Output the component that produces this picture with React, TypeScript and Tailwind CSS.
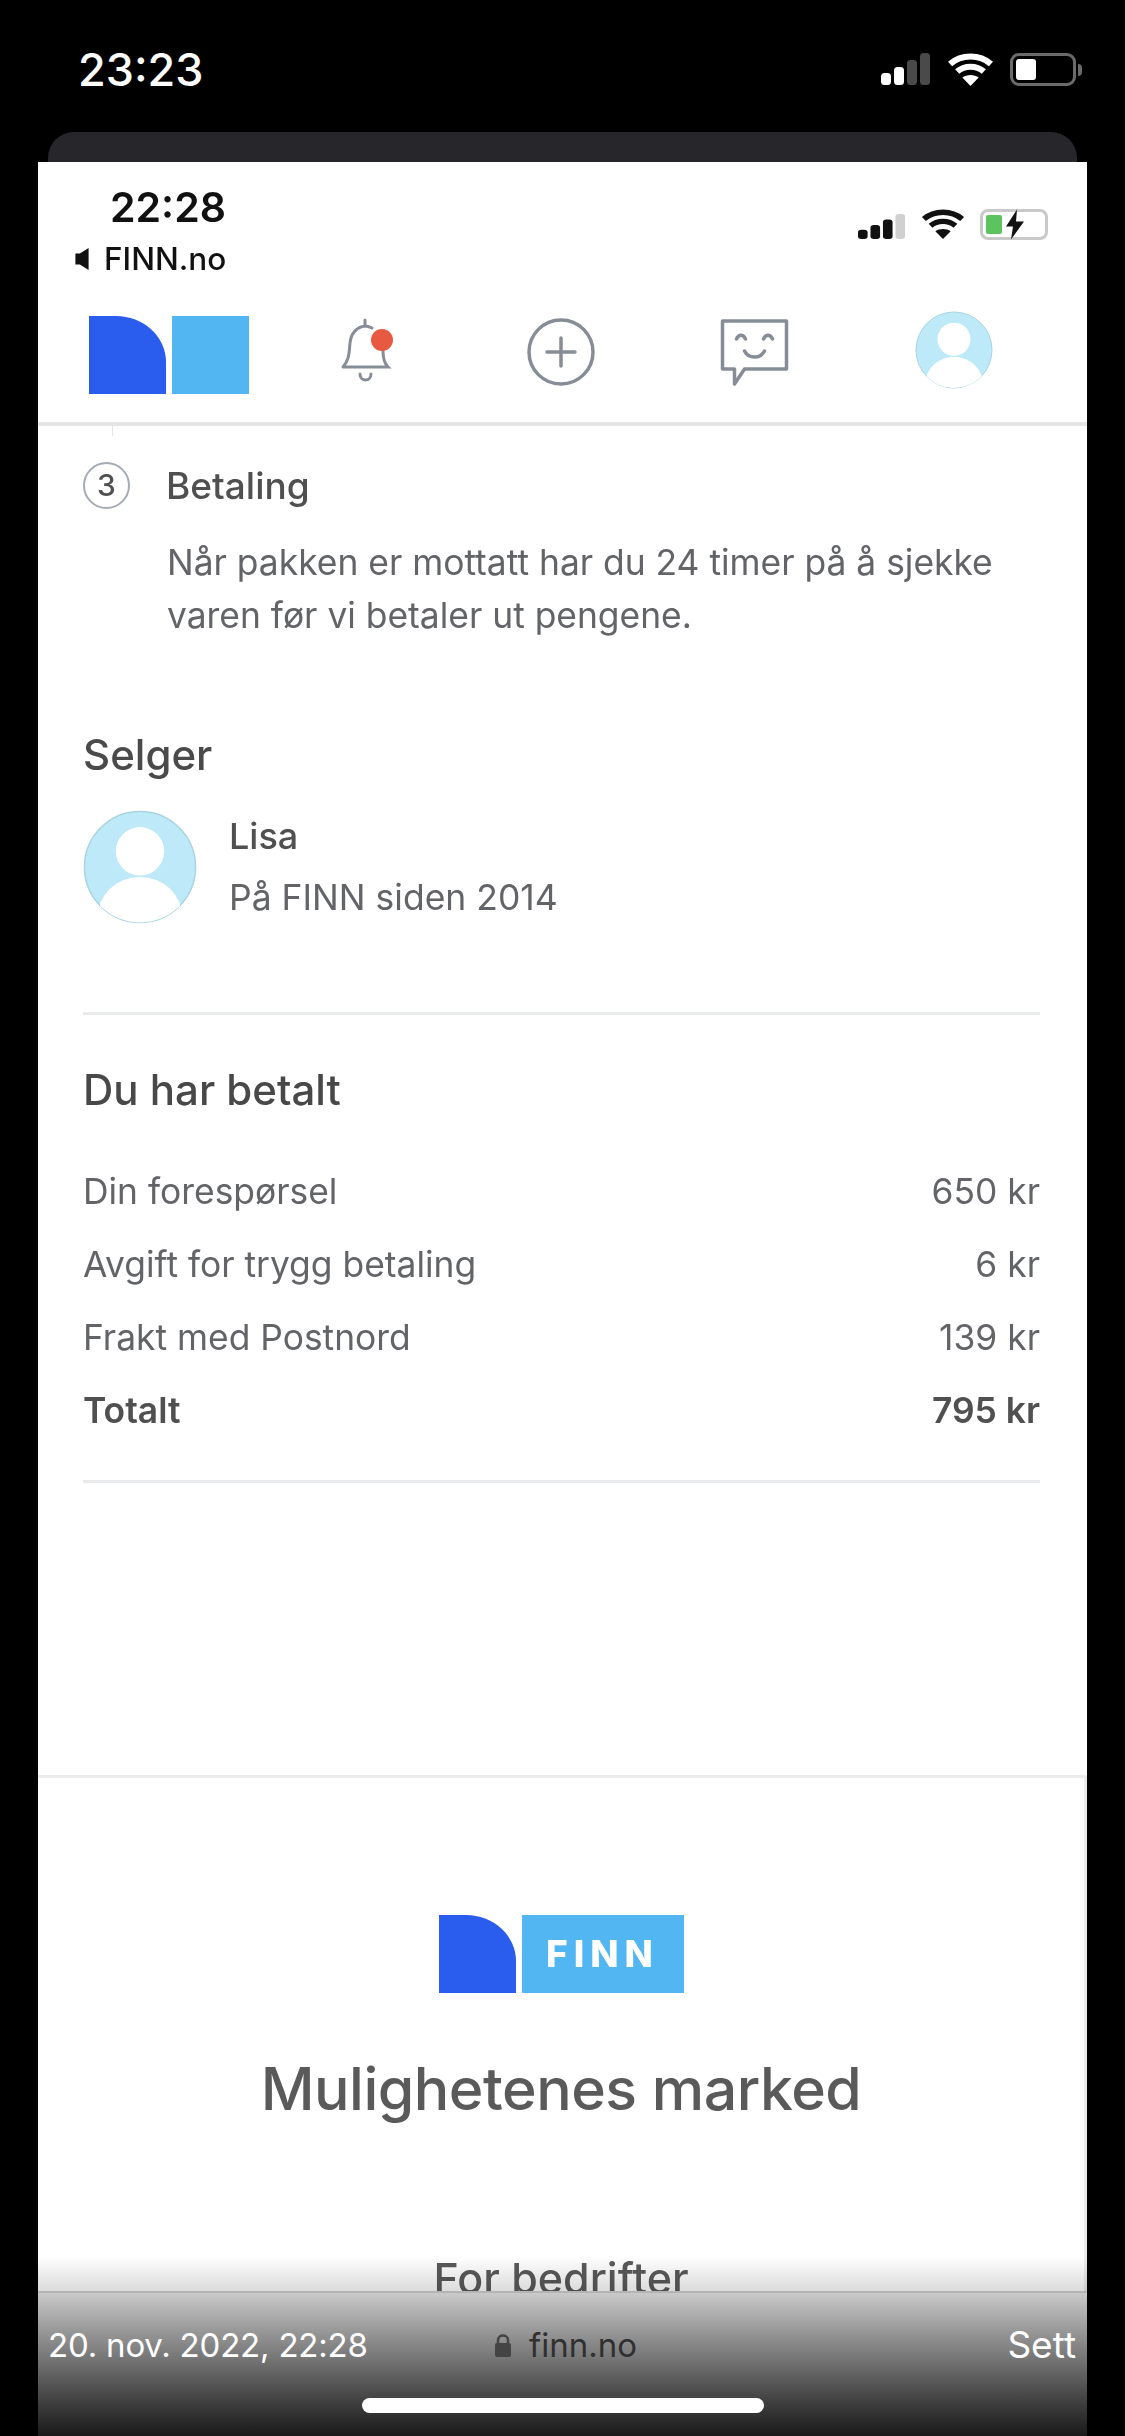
import type { FC } from 'react';

const ROWS = [
  { label: 'Din forespørsel', price: '650 kr' },
  { label: 'Avgift for trygg betaling', price: '6 kr' },
  { label: 'Frakt med Postnord', price: '139 kr' },
];

const Signal: FC<{ on: string; off: string; className: string; active: number }> = ({ on, off, className, active }) => (
  <svg viewBox="0 0 50 32" preserveAspectRatio="none" className={className}>
    {[
      { x: 0, y: 20, h: 12 },
      { x: 13, y: 14, h: 18 },
      { x: 26, y: 7, h: 25 },
      { x: 39, y: 0, h: 32 },
    ].map((b, i) => (
      <rect key={b.x} x={b.x} y={b.y} width="10" height={b.h} rx="3.500" fill={i < active ? on : off} />
    ))}
  </svg>
);

const Wifi: FC<{ color: string; className: string }> = ({ color, className }) => (
  <svg viewBox="0 0 46 33" preserveAspectRatio="none" className={className} fill="none" stroke={color} strokeWidth="6">
    <path d="M3 11 C14 1 32 1 43 11" />
    <path d="M10 18.500 C17 12 29 12 36 18.500" />
    <path d="M23 33 L15 24.500 C19 21 27 21 31 24.500 Z" fill={color} stroke="none" />
  </svg>
);

const Avatar: FC<{ className: string; id: string }> = ({ className, id }) => (
  <svg viewBox="0 0 80 80" className={className}>
    <defs>
      <clipPath id={id}>
        <circle cx="40" cy="40" r="39" />
      </clipPath>
    </defs>
    <circle cx="40" cy="40" r="39" fill="#bde9f9" stroke="#a9d3e0" strokeWidth="1" />
    <g clipPath={`url(#${id})`} fill="#ffffff">
      <circle cx="40" cy="29" r="17" />
      <ellipse cx="40" cy="76" rx="30" ry="29" />
    </g>
  </svg>
);

const Logo: FC<{ small?: boolean }> = ({ small }) => (
  <div className="flex gap-[6px]">
    <div className="w-[77px] h-[78px] bg-[#2a5cee] rounded-tr-[50px_46px]" />
    <div
      className={
        small
          ? "w-[162px] h-[78px] bg-[#52b6f3] flex items-center justify-center text-white text-[37px] font-extrabold tracking-[6px] font-['Inter',sans-serif]"
          : 'w-[77px] h-[78px] bg-[#52b6f3]'
      }
    >
      {small ? 'FINN' : null}
    </div>
  </div>
);

export default function App() {
  return (
    <div className="relative w-[1125px] h-[2436px] bg-black overflow-hidden font-['Inter',sans-serif]">
      {/* outer status bar */}
      <div className="h-[132px] flex justify-between pl-[78px] pr-[43px] pt-[44px]">
        <span className="text-white text-[45px] leading-[52px] font-medium">23:23</span>
        <div className="flex items-start gap-[16px] pt-[9px]">
          <Signal on="#ffffff" off="#4a4a4a" active={2} className="w-[50px] h-[32px]" />
          <Wifi color="#ffffff" className="w-[47px] h-[33px]" />
          <div className="flex items-center gap-[2px]">
            <div className="w-[66px] h-[33px] rounded-[9px] border-[3px] border-[#6b6b6b] p-[3px]">
              <div className="w-[20px] h-full bg-white rounded-[3px]" />
            </div>
            <div className="w-[4px] h-[12px] bg-[#6b6b6b] rounded-r-full" />
          </div>
        </div>
      </div>

      {/* card peeking out behind the screenshot */}
      <div className="mx-[48px] h-[30px] bg-[#26262b] rounded-t-[26px]" />

      {/* the screenshot */}
      <div className="mx-[38px] w-[1049px] h-[2274px] bg-white blur-[0.6px] text-[#626467]">
        <header className="h-[264px] border-b-[4px] border-[#e4e5e7]">
          <div className="flex justify-between pl-[72px] pr-[39px] pt-[21px] h-[71px]">
            <span className="text-[#111111] text-[41px] leading-[48px] font-semibold">22:28</span>
            <div className="flex items-start gap-[15px] pt-[26px] ml-auto">
              <Signal on="#111111" off="#d0d0d0" active={3} className="w-[48px] h-[25px] mt-[5px]" />
              <Wifi color="#111111" className="w-[44px] h-[30px]" />
              <div className="relative w-[68px] h-[31px] rounded-[8px] border-[3px] border-[#c9c9c9] p-[3px]">
                <div className="w-[16px] h-full bg-[#5cc35e] rounded-[2px]" />
                <svg viewBox="0 0 20 30" className="absolute left-[22px] top-[-3px] w-[20px] h-[31px]">
                  <path d="M12 0 L1 17 H8 L6 30 L19 12 H11 Z" fill="#111111" />
                </svg>
              </div>
            </div>
          </div>
          <div className="flex items-center pl-[37px] mt-[9px] h-[34px] text-[#111111] text-[31.500px] leading-[34px] font-medium">
            <svg viewBox="0 0 12 20" className="w-[14px] h-[22px] mr-[15px]">
              <path d="M12 0 V20 L4 15 H0 V5 H4 Z" fill="#111111" />
            </svg>
            FINN.no
          </div>
          <div className="flex items-start pl-[51px] pt-[40px]">
            <Logo />
            <svg viewBox="0 0 56 70" className="ml-[87px] mt-[1px] w-[60px] h-[70px]" fill="none" stroke="#878d96" strokeWidth="3">
              <path d="M27 3 V9 M5 50 C12 42 11 34 12 26 C13 16 19 10 27 9 C30 9 32 10 34 11 M45 34 C45 40 46 46 50 50 H5 M22 57 C22 65 33 65 33 57" strokeLinecap="round" />
              <circle cx="44" cy="23" r="11" fill="#e75a41" stroke="none" />
            </svg>
            <svg viewBox="0 0 68 68" className="ml-[131px] mt-[2px] w-[68px] h-[68px]" fill="none" stroke="#878d96" strokeWidth="3.500">
              <circle cx="34" cy="34" r="32" />
              <path d="M34 20 V48 M20 34 H48" strokeLinecap="round" />
            </svg>
            <svg viewBox="0 0 68 68" className="ml-[125px] mt-[2px] w-[69px] h-[68px]" fill="none" stroke="#878d96" strokeWidth="3.500" strokeLinejoin="round" strokeLinecap="round">
              <path d="M2 3 H66 V51 H24 L14 66 V51 H2 Z" />
              <path d="M16 21 C18 16 23 16 25 21 M43 21 C45 16 50 16 52 21 M24 33 C28 41 40 41 44 33" />
            </svg>
            <Avatar id="nav-avatar" className="ml-[126px] mt-[-5px] w-[78px] h-[78px]" />
          </div>
        </header>

        <main className="px-[45px]">
          <div className="ml-[29px] w-px h-[10px] bg-[#e4e5e7]" />

          <section>
            <div className="flex items-center gap-[36px] mt-[26px]">
              <div className="w-[47px] h-[47px] rounded-full border-[2.500px] border-[#a5abb5] flex items-center justify-center text-[30px] font-medium text-[#505050]">
                3
              </div>
              <h3 className="text-[37px] leading-[46px] font-medium text-[#505050]">Betaling</h3>
            </div>
            <p className="ml-[84px] mt-[27px] text-[35.400px] leading-[53px] whitespace-pre-line">
              {'Når pakken er mottatt har du 24 timer på å sjekke\nvaren før vi betaler ut pengene.'}
            </p>
          </section>

          <section className="mt-[88px]">
            <h2 className="text-[42px] leading-[50px] font-medium text-[#4a4a4a]">Selger</h2>
            <div className="flex items-center gap-[32px] mt-[30px]">
              <Avatar id="seller-avatar" className="w-[114px] h-[114px]" />
              <div>
                <p className="text-[36px] leading-[46px] font-medium text-[#505050]">Lisa</p>
                <p className="mt-[16px] text-[35.500px] leading-[46px]">På FINN siden 2014</p>
              </div>
            </div>
          </section>

          <section className="mt-[88px] mr-[2px] border-t-[3px] border-[#e9eaec] border-b-[3px] pb-[46px]">
            <h2 className="mt-[50px] text-[42px] leading-[50px] font-medium text-[#484848]">Du har betalt</h2>
            <div className="mt-[54px] flex flex-col gap-[27px] text-[35.400px] leading-[46px]">
              {ROWS.map((row) => (
                <div key={row.label} className="flex justify-between">
                  <span>{row.label}</span>
                  <span>{row.price}</span>
                </div>
              ))}
              <div className="flex justify-between font-semibold text-[#505050]">
                <span>Totalt</span>
                <span>795 kr</span>
              </div>
            </div>
          </section>
        </main>

        <footer className="mt-[292px] border-t-[3px] border-r-[3px] border-[#ececee] flex flex-col items-center">
          <div className="mt-[137px]">
            <Logo small />
          </div>
          <p className="mt-[58px] text-[59px] leading-[76px] font-medium tracking-[-0.5px] text-[#5a5a5a]">
            Mulighetenes marked
          </p>
          <p className="mt-[125px] text-[43px] leading-[52px] font-medium text-[#5a5a5a]">For bedrifter</p>
        </footer>
      </div>

      {/* photo-viewer bar over the screenshot */}
      <div className="absolute left-[38px] bottom-0 w-[1049px] h-[180px] flex flex-col">
        <div className="h-[35px] bg-linear-to-b from-black/0 to-black/[0.14]" />
        <div className="relative flex-1 border-t-[2px] border-[#b4b4b4] bg-linear-to-b from-[#cacaca] via-[#6e6e6e] to-[#1a1a1a]">
          <div className="flex items-center justify-between pl-[10px] pr-[11px] pt-[30px]">
            <span className="text-white text-[33px] leading-[44px] tracking-[-0.2px]">20. nov. 2022, 22:28</span>
            <span className="text-white text-[37px] leading-[44px]">Sett</span>
          </div>
          <div className="absolute left-[457px] top-[30px] flex items-center gap-[18px] text-[#303030] text-[33px] leading-[44px]">
            <svg viewBox="0 0 16 24" className="w-[16px] h-[24px]">
              <path d="M3 10 V7 C3 1 13 1 13 7 V10" fill="none" stroke="#444444" strokeWidth="2.500" />
              <rect x="0" y="10" width="16" height="14" rx="2" fill="#444444" />
            </svg>
            finn.no
          </div>
          <div className="absolute left-[324px] top-[105px] w-[402px] h-[15px] rounded-full bg-white" />
        </div>
      </div>
    </div>
  );
}
